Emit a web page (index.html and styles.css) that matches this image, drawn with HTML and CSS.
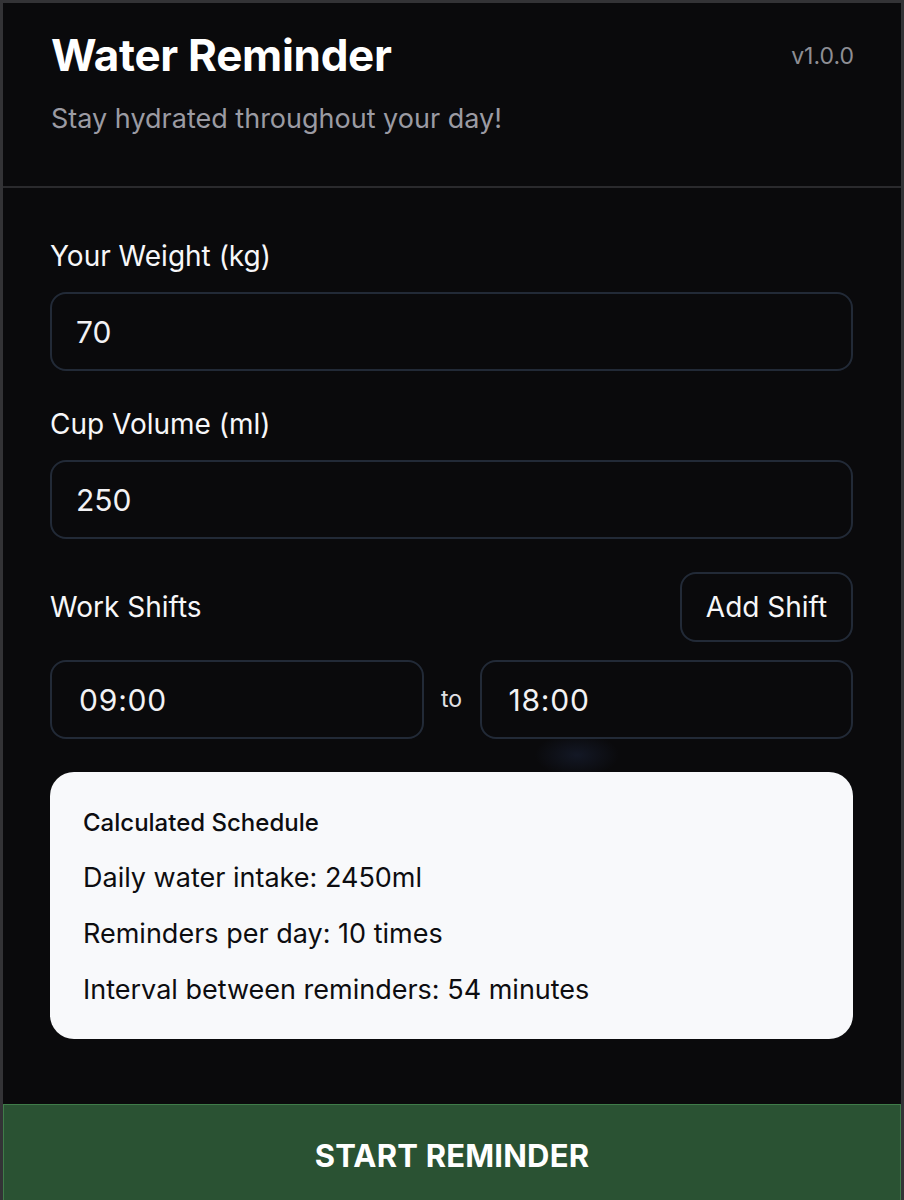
FILE: index.html
```html
<!DOCTYPE html>
<html lang="en">
<head>
<meta charset="utf-8">
<title>Water Reminder</title>
<link rel="stylesheet" href="styles.css">
</head>
<body>
<div class="window">
  <header class="header">
    <div class="header-text">
      <h1 class="title">Water Reminder</h1>
      <p class="subtitle">Stay hydrated throughout your day!</p>
    </div>
    <span class="version">v1.0.0</span>
  </header>
  <main class="content">
    <div class="field">
      <label class="label">Your Weight (kg)</label>
      <div class="input">70</div>
    </div>
    <div class="field">
      <label class="label">Cup Volume (ml)</label>
      <div class="input">250</div>
    </div>
    <div class="shift-head">
      <span class="label">Work Shifts</span>
      <button class="add-btn">Add Shift</button>
    </div>
    <div class="shift-row">
      <div class="input time">09:00</div>
      <span class="to">to</span>
      <div class="input time">18:00</div>
    </div>
    <section class="card">
      <h2 class="card-title">Calculated Schedule</h2>
      <p class="card-line">Daily water intake: 2450ml</p>
      <p class="card-line">Reminders per day: 10 times</p>
      <p class="card-line">Interval between reminders: 54 minutes</p>
    </section>
  </main>
  <button class="start-btn">START REMINDER</button>
</div>
</body>
</html>
```

FILE: styles.css
```css
* { box-sizing: border-box; }
html, body {
  margin: 0;
  padding: 0;
  background: #2a2a2c;
  height: 1200px;
  overflow: hidden;
}
body {
  font-family: Inter, "Noto Sans", "Liberation Sans", sans-serif;
  color: #f5f5f7;
}
.window {
  width: 904px;
  height: 1200px;
  background: #0a0a0c;
  border: 3px solid #333336;
  border-bottom: none;
  display: flex;
  flex-direction: column;
}
.header {
  display: flex;
  justify-content: space-between;
  align-items: flex-start;
  padding: 28px 47px 51px 48px;
  border-bottom: 2px solid #2a2a2d;
}
.title {
  margin: 0;
  font-size: 44px;
  line-height: 48px;
  font-weight: 700;
  letter-spacing: -0.3px;
  color: #ffffff;
}
.subtitle {
  margin: 24px 0 0;
  font-size: 27px;
  line-height: 32px;
  color: #9b9ba3;
  font-weight: 400;
}
.version {
  font-size: 23px;
  line-height: 26px;
  margin-top: 12px;
  color: #8e8e94;
}
.content {
  padding: 52px 48px 0 47px;
  display: flex;
  flex-direction: column;
  background-image: radial-gradient(ellipse 42px 22px at 574px 567px, rgba(40, 55, 95, 0.3), rgba(10, 10, 12, 0) 100%);
}
.field { display: flex; flex-direction: column; margin-bottom: 37px; }
.field + .field { margin-bottom: 33px; }
.label {
  font-size: 28px;
  line-height: 32px;
  font-weight: 400;
  color: #f7f7f9;
}
.field .label { margin-bottom: 20px; }
.input {
  height: 79px;
  border: 2px solid #222a37;
  border-radius: 16px;
  background: #0a0a0c;
  padding: 0 24px;
  display: flex;
  align-items: center;
  font-size: 30px;
  color: #f2f2f4;
  font-weight: 400;
}
.shift-head {
  display: flex;
  justify-content: space-between;
  align-items: center;
  height: 70px;
  margin-bottom: 18px;
}
.add-btn {
  height: 70px;
  width: 173px;
  border: 2px solid #222a37;
  border-radius: 16px;
  background: #0a0a0c;
  color: #f7f7f9;
  font-family: inherit;
  font-size: 28px;
  font-weight: 400;
  padding: 0;
}
.shift-row {
  display: flex;
  align-items: center;
  margin-bottom: 33px;
}
.time { flex: 1; padding-left: 27px; letter-spacing: 0.8px; }
.to {
  width: 56px;
  text-align: center;
  font-size: 23px;
  color: #e0e0e4;
  padding-bottom: 2px;
}
.card {
  background: #f8f9fb;
  border-radius: 24px;
  padding: 36px 32px 33px 33px;
  color: #0d0d10;
}
.card-title {
  margin: 0;
  font-size: 24px;
  line-height: 30px;
  font-weight: 500;
}
.card-line {
  margin: 24px 0 0;
  font-size: 27px;
  line-height: 32px;
  font-weight: 400;
}
.start-btn {
  margin-top: 65px;
  height: 102px;
  flex-shrink: 0;
  width: 100%;
  background: #2a5233;
  border: 1px solid #3f7c49;
  color: #ffffff;
  font-family: inherit;
  font-size: 31px;
  font-weight: 700;
  letter-spacing: 0.2px;
  padding: 0;
}
```
